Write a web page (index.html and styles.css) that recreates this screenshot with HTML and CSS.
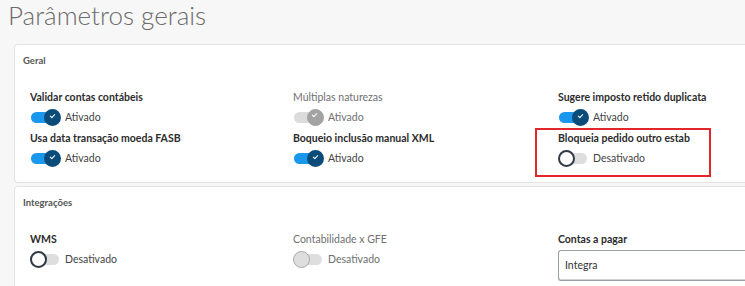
FILE: index.html
```html
<!DOCTYPE html>
<html lang="pt-BR">
<head>
    <meta charset="UTF-8">
    <meta name="viewport" content="width=device-width, initial-scale=1.0">
    <title>Parâmetros gerais</title>
    <link rel="stylesheet" href="styles.css">
</head>
<body>
    <h1 class="page-title">Parâmetros gerais</h1>

    <div class="card">
        <div class="card-title">Geral</div>
        <div class="fields">
            <div class="field">
                <div class="field-label">Validar contas contábeis</div>
                <div class="switch on"><span class="track"><span class="knob"></span></span><span class="switch-text">Ativado</span></div>
            </div>
            <div class="field disabled">
                <div class="field-label">Múltiplas naturezas</div>
                <div class="switch on"><span class="track"><span class="knob"></span></span><span class="switch-text">Ativado</span></div>
            </div>
            <div class="field">
                <div class="field-label">Sugere imposto retido duplicata</div>
                <div class="switch on"><span class="track"><span class="knob"></span></span><span class="switch-text">Ativado</span></div>
            </div>
            <div class="field">
                <div class="field-label">Usa data transação moeda FASB</div>
                <div class="switch on"><span class="track"><span class="knob"></span></span><span class="switch-text">Ativado</span></div>
            </div>
            <div class="field">
                <div class="field-label">Boqueio inclusão manual XML</div>
                <div class="switch on"><span class="track"><span class="knob"></span></span><span class="switch-text">Ativado</span></div>
            </div>
            <div class="field highlighted">
                <div class="field-label">Bloqueia pedido outro estab</div>
                <div class="switch"><span class="track"><span class="knob"></span></span><span class="switch-text">Desativado</span></div>
            </div>
        </div>
    </div>

    <div class="card">
        <div class="card-title">Integrações</div>
        <div class="fields">
            <div class="field">
                <div class="field-label">WMS</div>
                <div class="switch"><span class="track"><span class="knob"></span></span><span class="switch-text">Desativado</span></div>
            </div>
            <div class="field disabled">
                <div class="field-label">Contabilidade x GFE</div>
                <div class="switch"><span class="track"><span class="knob"></span></span><span class="switch-text">Desativado</span></div>
            </div>
            <div class="field">
                <div class="field-label">Contas a pagar</div>
                <div class="select">Integra</div>
            </div>
        </div>
    </div>
</body>
</html>
```

FILE: styles.css
```css
body {
    margin: 0;
    padding: 0 0 0 14px;
    background: #f7f7f7;
    font-family: Lato, "Noto Sans", sans-serif;
    color: #2c2c2c;
    overflow: hidden;
}

.page-title {
    margin: 0 0 0 -6px;
    height: 44px;
    font-size: 26px;
    font-weight: 300;
    color: #6b6b6b;
    line-height: 31px;
}

/* Cards - they run on past the right edge of the window */
.card {
    background: #fff;
    border: 1px solid #e4e4e4;
    border-right: none;
    border-radius: 4px 0 0 4px;
    padding: 10px 0 14px 15px;
    margin-bottom: 3px;
}

.card-title {
    font-size: 9.5px;
    font-weight: 700;
    color: #555;
    line-height: 12px;
    margin-left: -7px;
    margin-bottom: 22px;
}

.fields {
    display: grid;
    grid-template-columns: 263px 265px 1fr;
    row-gap: 3px;
}

.field {
    position: relative;
}

.field-label {
    font-size: 10.5px;
    font-weight: 700;
    line-height: 16px;
    color: #2c2c2c;
    margin-bottom: 2px;
}

.field.disabled .field-label {
    font-weight: 400;
    color: #6f6f6f;
}

/* Red annotation box */
.field.highlighted::after {
    content: "";
    position: absolute;
    left: -23px;
    top: -2px;
    width: 172px;
    height: 45px;
    border: 2px solid #e3262b;
}

/* Switches */
.switch {
    display: flex;
    align-items: center;
    height: 20px;
}

.track {
    position: relative;
    width: 28px;
    height: 11px;
    border-radius: 6px;
    background: #dedede;
    margin-left: 1px;
}

.knob {
    position: absolute;
    top: -3px;
    left: -1px;
    width: 13px;
    height: 13px;
    border-radius: 50%;
    background: #fff;
    border: 2px solid #2f3a44;
}

.switch.on .track {
    background: #1a98ee;
}

.switch.on .knob {
    left: 13px;
    background: #0b4c7a;
    border-color: #0b4c7a;
}

.switch.on .knob::after {
    content: "";
    position: absolute;
    left: 4px;
    top: 3px;
    width: 4px;
    height: 2px;
    border-left: 1.5px solid #fff;
    border-bottom: 1.5px solid #fff;
    transform: rotate(-45deg);
}

.field.disabled .switch.on .track {
    background: #dcdcdc;
}

.field.disabled .switch.on .knob {
    background: #a3a3a3;
    border-color: #a3a3a3;
}

.field.disabled .switch .knob {
    background: #dedede;
    border-color: #a8a8a8;
    border-width: 1px;
    width: 15px;
    height: 15px;
}

.switch-text {
    font-size: 10.5px;
    color: #444;
    margin-left: 6px;
}

.field.disabled .switch-text {
    color: #6f6f6f;
}

/* Select */
.select {
    margin-top: 3px;
    height: 29px;
    border: 1px solid #9aa0a5;
    border-right: none;
    border-radius: 3px 0 0 3px;
    padding-left: 6px;
    font-size: 10.5px;
    line-height: 29px;
    color: #333;
    box-shadow: inset 0 -1px 0 #cfd3d6;
}
```
